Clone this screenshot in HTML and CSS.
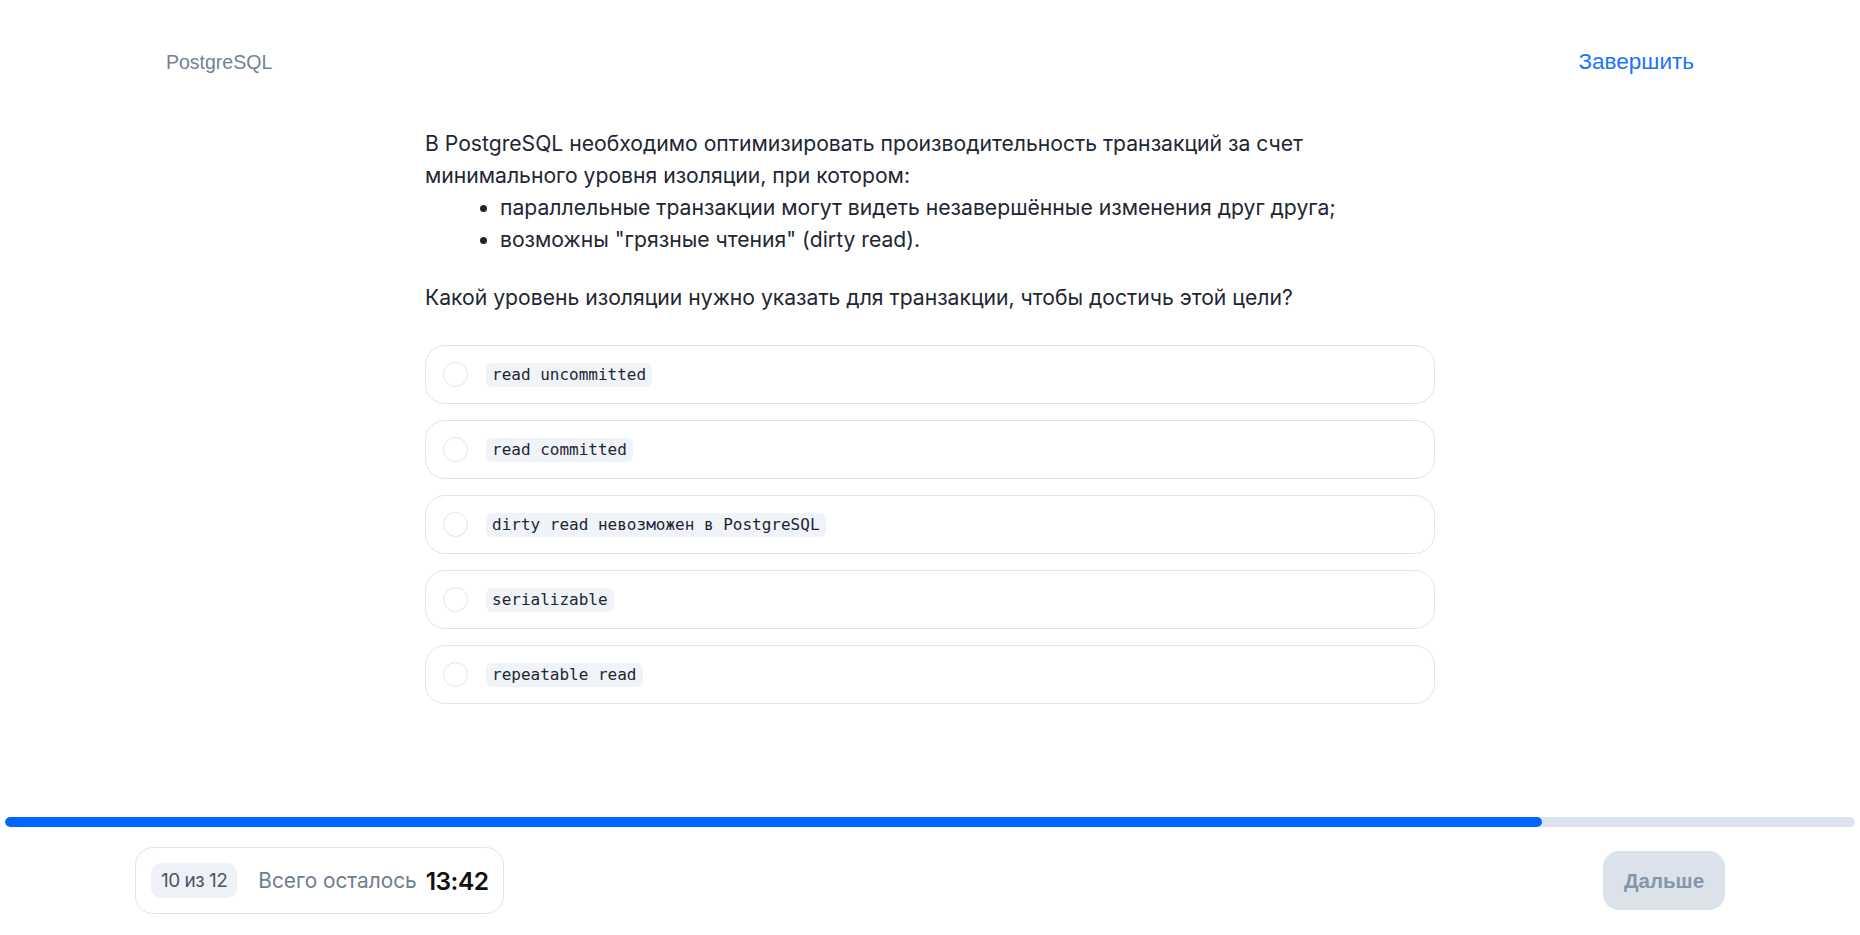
FILE: index.html
```html
<!DOCTYPE html>
<html lang="ru">
<head>
<meta charset="utf-8">
<title>PostgreSQL</title>
<link rel="stylesheet" href="styles.css">
</head>
<body>
<div class="page">
  <header class="topbar">
    <div class="course">PostgreSQL</div>
    <a class="finish" href="#">Завершить</a>
  </header>
  <main class="content">
    <div class="question">
      <p class="q-text">В PostgreSQL необходимо оптимизировать производительность транзакций за счет минимального уровня изоляции, при котором:</p>
      <ul class="q-list">
        <li>параллельные транзакции могут видеть незавершённые изменения друг друга;</li>
        <li>возможны "грязные чтения" (dirty read).</li>
      </ul>
      <p class="q-ask">Какой уровень изоляции нужно указать для транзакции, чтобы достичь этой цели?</p>
    </div>
    <div class="options">
      <label class="option"><span class="radio"></span><code class="chip">read uncommitted</code></label>
      <label class="option"><span class="radio"></span><code class="chip">read committed</code></label>
      <label class="option"><span class="radio"></span><code class="chip">dirty read невозможен в PostgreSQL</code></label>
      <label class="option"><span class="radio"></span><code class="chip">serializable</code></label>
      <label class="option"><span class="radio"></span><code class="chip">repeatable read</code></label>
    </div>
  </main>
  <div class="progress"><div class="progress-fill" style="width:83.1%"></div></div>
  <footer class="bottombar">
    <div class="status">
      <span class="counter">10 из 12</span>
      <span class="left-label">Всего осталось</span>
      <span class="timer">13:42</span>
    </div>
    <button class="next" type="button">Дальше</button>
  </footer>
</div>
</body>
</html>
```

FILE: styles.css
```css
* { box-sizing: border-box; }
html, body { margin: 0; padding: 0; background: #ffffff; }
body {
  font-family: Inter, "Noto Sans", sans-serif;
  color: #1f2633;
}
.page {
  height: 935px;
  display: flex;
  flex-direction: column;
}
.topbar {
  display: flex;
  justify-content: space-between;
  align-items: center;
  padding: 48px 166px 0 166px;
  height: 76px;
}
.course {
  font-family: "Liberation Sans", Arial, sans-serif;
  font-size: 19.5px;
  color: #748296;
}
.finish {
  font-family: "Liberation Sans", Arial, sans-serif;
  font-size: 22.5px;
  color: #1a73ff;
  text-decoration: none;
}
.content {
  width: 1010px;
  margin: 52px auto 0 auto;
  flex: 1;
}
.question {
  font-size: 21.15px;
  line-height: 32px;
  letter-spacing: 0;
}
.q-text { margin: 0; }
.q-list {
  margin: 0;
  padding-left: 75px;
}
.q-list li { padding-left: 0; }
.q-ask { margin: 26px 0 0 0; }
.options {
  margin-top: 31px;
  display: flex;
  flex-direction: column;
  gap: 16px;
}
.option {
  display: flex;
  align-items: center;
  gap: 18px;
  height: 59px;
  padding: 0 17px;
  border: 1px solid #dfe5ee;
  border-radius: 20px;
  background: #fff;
}
.radio {
  width: 25px;
  height: 25px;
  border-radius: 50%;
  border: 1.5px solid #dfe5ee;
  flex: none;
}
.chip {
  font-family: "DejaVu Sans Mono", monospace;
  font-size: 16px;
  line-height: 24px;
  padding: 0 6px;
  background: #f0f3f8;
  border-radius: 6px;
  color: #1f2633;
}
.progress {
  margin: 0 5px;
  height: 10px;
  border-radius: 5px;
  background: #dde3ec;
  overflow: hidden;
}
.progress-fill {
  height: 100%;
  background: #0066ff;
  border-radius: 5px;
}
.bottombar {
  display: flex;
  justify-content: space-between;
  align-items: center;
  padding: 20px 135px 21px 135px;
}
.status {
  display: flex;
  align-items: center;
  height: 67px;
  padding: 0 14px 0 15px;
  border: 1px solid #dfe5ee;
  border-radius: 18px;
  gap: 0;
}
.counter {
  background: #eef2f7;
  border-radius: 10px;
  height: 35px;
  padding: 0 10px;
  display: flex;
  align-items: center;
  font-size: 19px;
  color: #4a5568;
  letter-spacing: -0.5px;
  margin-right: 21px;
}
.left-label {
  font-size: 20.8px;
  color: #6f7d8f;
  margin-right: 9px;
}
.timer {
  font-size: 24.5px;
  font-weight: 600;
  color: #111;
  letter-spacing: -0.5px;
}
.next {
  width: 122px;
  height: 59px;
  border: none;
  border-radius: 16px;
  background: #dce2ea;
  color: #8596a9;
  font-family: "Liberation Sans", Arial, sans-serif;
  font-size: 20.5px;
  font-weight: bold;
}
```
